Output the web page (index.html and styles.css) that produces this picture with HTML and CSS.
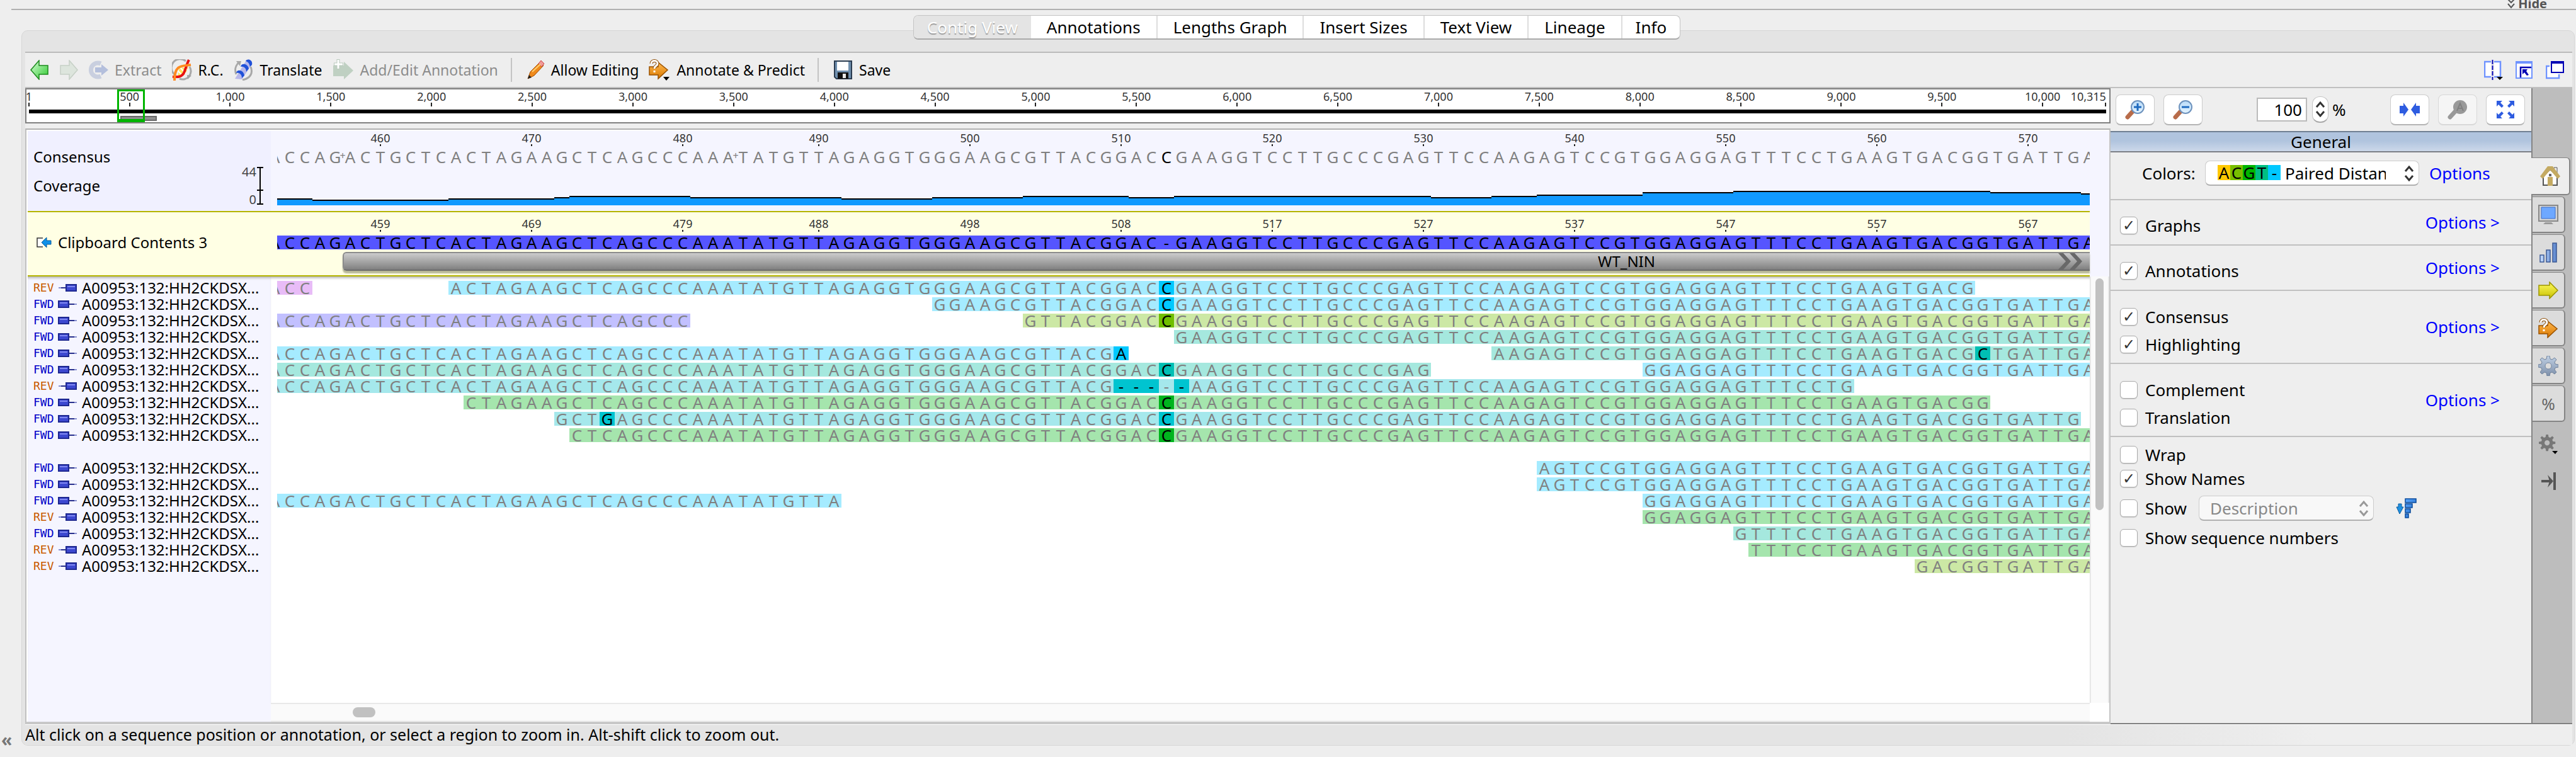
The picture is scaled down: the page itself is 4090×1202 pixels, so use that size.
FILE: index.html
```html
<!DOCTYPE html>
<html lang="en">
<head>
<meta charset="utf-8">
<title>Contig View</title>
<link rel="stylesheet" href="styles.css">
</head>
<body>
<svg class="defs" aria-hidden="true">
  <defs>
    <linearGradient id="gGreen" x1="0" y1="0" x2="1" y2="1"><stop offset="0" stop-color="#d8ffd8"/><stop offset="1" stop-color="#2fc82f"/></linearGradient>
    <linearGradient id="gOrange" x1="0" y1="0" x2="0" y2="1"><stop offset="0" stop-color="#ffb950"/><stop offset="1" stop-color="#d97800"/></linearGradient>
    <linearGradient id="gYellow" x1="0" y1="0" x2="0" y2="1"><stop offset="0" stop-color="#fffb60"/><stop offset="1" stop-color="#c8c000"/></linearGradient>
    <linearGradient id="gBlue" x1="0" y1="0" x2="1" y2="1"><stop offset="0" stop-color="#5aa8ff"/><stop offset="1" stop-color="#1a62c0"/></linearGradient>
    <linearGradient id="gBar" x1="0" y1="0" x2="1" y2="0"><stop offset="0" stop-color="#c4dcff"/><stop offset="1" stop-color="#5a84cc"/></linearGradient>
    <linearGradient id="gGear" x1="0" y1="0" x2="0" y2="1"><stop offset="0" stop-color="#c0d0e4"/><stop offset="1" stop-color="#7e90aa"/></linearGradient>
    <linearGradient id="gLens" x1="0" y1="0" x2="0" y2="1"><stop offset="0" stop-color="#b8daf8"/><stop offset="1" stop-color="#e4f4ff"/></linearGradient>
    <path id="gear" d="M14 0h4l1 5 3 1 4-3 3 3-3 4 1 3 5 1v4l-5 1-1 3 3 4-3 3-4-3-3 1-1 5h-4l-1-5-3-1-4 3-3-3 3-4-1-3-5-1v-4l5-1 1-3-3-4 3-3 4 3 3-1zM16 11a5 5 0 1 0 .1 0z" fill-rule="evenodd"/>
    <g id="predict"><path d="M1 12h14V5l15 12-15 14v-6H1z" fill="url(#gOrange)" stroke="#9a5200" stroke-width="1.5"/><path d="M4 7c0-6 10-6 10 0 0 4-5 3-5 8" fill="none" stroke="#8a4a00" stroke-width="5"/><path d="M4 7c0-6 10-6 10 0 0 4-5 3-5 8M9 18v3" fill="none" stroke="#fff" stroke-width="3"/></g>
    <g id="steps" fill="none" stroke-width="3"><path d="M2 9l6-7 6 7M2 16l6 7 6-7"/></g>
  </defs>
</svg>

<header class="top"><button class="hide" type="button"><svg width="14" height="16" viewBox="0 0 14 16"><path d="M2 1l5 5 5-5M2 8l5 6 5-6" fill="none" stroke="#555" stroke-width="2"/></svg>Hide</button></header>

<nav class="tabs">
  <button class="tab active" type="button">Contig View</button>
  <button class="tab" type="button">Annotations</button>
  <button class="tab" type="button">Lengths Graph</button>
  <button class="tab" type="button">Insert Sizes</button>
  <button class="tab" type="button">Text View</button>
  <button class="tab" type="button">Lineage</button>
  <button class="tab" type="button">Info</button>
</nav>

<main class="frame">
  <div class="toolbar">
    <button type="button" class="tool" aria-label="Back"><svg width="30" height="32" viewBox="0 0 30 32"><path d="M1 16L14 1v8h14v14H14v8z" fill="url(#gGreen)" stroke="#1c8a1c" stroke-width="1.5"/></svg></button>
    <button type="button" class="tool" aria-label="Forward" disabled><svg width="30" height="32" viewBox="0 0 30 32"><path d="M29 16L16 1v8H2v14h14v8z" fill="#dde5dd" stroke="#c6d0c6" stroke-width="1.5"/></svg></button>
    <button type="button" class="tool extract" disabled><svg width="32" height="32" viewBox="0 0 32 32"><path d="M20 6a11 11 0 1 0 0 20" fill="none" stroke="#c9cfdf" stroke-width="7"/><path d="M11 12h10V7l11 9-11 9v-5H11z" fill="#b4bfdc"/></svg>Extract</button>
    <button type="button" class="tool"><svg width="32" height="34" viewBox="0 0 32 34"><path d="M4 24A13 13 0 0 1 22 3M28 12A13 13 0 0 1 12 31" fill="none" stroke="#a8a8a8" stroke-width="3"/><path d="M24 25l7 1-6 6z" fill="#a0a0a0"/><path d="M9 27l3-13 14-1-5 11z" fill="#ffe65a"/><path d="M13 13l9 10M9 18l8 8M19 11l5 6" stroke="#fff" stroke-width="2"/><path d="M1 28h9c12-2 10-14 17-27" fill="none" stroke="#e81010" stroke-width="4"/><path d="M4 34C4 8 16 11 30 9" fill="none" stroke="#ff8a20" stroke-width="4"/></svg>R.C.</button>
    <button type="button" class="tool"><svg width="32" height="34" viewBox="0 0 32 34"><path d="M4 24C0 14 5 8 9 4M27 12c4 10 0 18-13 21" fill="none" stroke="#a8a8a8" stroke-width="3"/><path d="M4 3h8l-2 8z" fill="#a8a8a8"/><path d="M2 31L20 2l9 6-16 24z" fill="#b8b8ea"/><path d="M4 22c1-7 12-5 13 4l-4 4c0-7-5-9-9-8zM11 12c1-7 12-5 13 3l-4 5c0-6-4-9-9-8zM19 3c3-5 12-2 10 6l-3 3c-1-5-3-8-7-9z" fill="#1f50d8"/></svg>Translate</button>
    <button type="button" class="tool" disabled><svg width="34" height="34" viewBox="0 0 34 34"><path d="M1 10h17V4l15 14-15 14v-5H1z" fill="#bfd0c2"/><path d="M9 0v16M2 8h15" stroke="#b9c9bc" stroke-width="5"/><path d="M9 1v14M3 8h13" stroke="#fff" stroke-width="3"/></svg>Add/Edit Annotation</button>
    <span class="rule"></span>
    <button type="button" class="tool"><svg width="28" height="32" viewBox="0 0 28 32"><path d="M1 30l4-11L20 4l6 5L11 25z" fill="#ef8a1c" stroke="#a04a00"/><path d="M18 6l4-5 5 5-4 5z" fill="#f09a9a" stroke="#c44"/><path d="M8 19l13-12" stroke="#ffd070" stroke-width="2"/><path d="M1 30l2-6 4 4z" fill="#222"/></svg>Allow Editing</button>
    <button type="button" class="tool"><svg width="34" height="34" viewBox="0 0 34 34"><use href="#predict"/><path d="M23 28h10l-5 6z"/></svg>Annotate &amp; Predict</button>
    <span class="rule"></span>
    <button type="button" class="tool"><svg width="30" height="30" viewBox="0 0 30 30"><path d="M1 1h27v28H4l-3-3z" fill="#6f8fae" stroke="#2b3c50" stroke-width="2"/><path d="M5 2h18v14H5z" fill="#fff"/><path d="M6 19h17v10H6z" fill="#111"/><path d="M14 21h5v7h-5z" fill="#e8e8e8"/></svg>Save</button>
    <span class="grow"></span>
    <div class="window-tools">
      <button type="button" class="tool" aria-label="Split view"><svg width="30" height="32" viewBox="0 0 30 32"><path d="M11 3H1v24h10M16 3h10v24H16" fill="#fff" stroke="#6f93ff" stroke-width="2.5"/><path d="M13.500 0v32" stroke="#0000b4" stroke-width="2" stroke-dasharray="7 2"/><path d="M20 27h10l-5 5z"/></svg></button>
      <button type="button" class="tool" aria-label="Expand document"><svg width="28" height="30" viewBox="0 0 28 30"><path d="M1 2h25v26H1z" fill="#fff" stroke="#6f93ff" stroke-width="2"/><path d="M0 1h27v4H0z" fill="#6f93ff"/><path d="M8 27V11h17" fill="none" stroke="#0000b4" stroke-width="2.500"/><path d="M11 14h8l-2 3 4 6-3 1-4-5-3 3z" fill="#0000b4"/></svg></button>
      <button type="button" class="tool" aria-label="New window"><svg width="30" height="30" viewBox="0 0 30 30"><path d="M6 9H1v19h20v-6" fill="#fff" stroke="#6f93ff" stroke-width="2.500"/><path d="M9 2h19v17H9z" fill="#fff" stroke="#0000b4" stroke-width="2"/><path d="M8 1h21v4H8z" fill="#0000b4"/></svg></button>
    </div>
  </div>

  <div class="workspace">
    <section class="document">
      <div class="overview">
        <div class="scale" id="scale"></div>
        <div class="genome"></div>
        <div class="feature"></div>
        <div class="viewport"></div>
      </div>
      <div class="viewer">
        <div class="names head">
          <div class="name-consensus">Consensus</div>
          <div class="name-coverage"><span>Coverage</span>
            <span class="axis"><span class="limits"><span>44</span><span>0</span></span><svg width="11" height="60" viewBox="0 0 11 60"><path d="M0 1h10M0 37h10M0 59h10M5 1v58" stroke="#000" stroke-width="2" fill="none"/></svg></span></div>
        </div>
        <div class="track head">
          <div class="lane ticks" id="consensusTicks"></div>
          <div class="lane bases grey" id="consensus"></div>
          <div class="lane coverage" id="coverage"></div>
        </div>
        <div class="side head"></div>

        <div class="names reference"><svg width="24" height="18" viewBox="0 0 24 18"><path d="M10 2H1v14h9" fill="#fff" stroke="#333" stroke-width="1.500"/><path d="M8 9l8-8v5h7v6h-7v5z" fill="#1090e8" stroke="#0a5a9a"/></svg>Clipboard Contents 3</div>
        <div class="track reference">
          <div class="lane ticks" id="referenceTicks"></div>
          <div class="lane bases selected" id="reference"></div>
          <div class="annotation"><span>WT_NIN</span><svg width="40" height="26" viewBox="0 0 40 26"><path d="M0 0h8l12 13L8 26H0l12-13zM18 0h8l12 13-12 13h-8l12-13z" fill="#686868"/></svg></div>
        </div>
        <div class="side head"></div>

        <div class="names reads" id="names"></div>
        <div class="track reads" id="reads"></div>
        <div class="side vbar"><div class="thumb"></div></div>

        <div class="names foot"></div>
        <div class="hbar"><div class="thumb"></div></div>
        <div class="corner"></div>
      </div>
    </section>

    <section class="options">
      <div class="zoom">
        <button type="button" aria-label="Zoom in"><svg width="32" height="32" viewBox="0 0 32 32"><path d="M4 28l9-10" stroke="#b86c4a" stroke-width="7" stroke-linecap="round"/><circle cx="20" cy="12" r="10" fill="url(#gLens)" stroke="#6d92bd" stroke-width="2"/><path d="M20 6v12M14 12h12" stroke="#1e6ac0" stroke-width="3"/></svg></button>
        <button type="button" aria-label="Zoom out"><svg width="32" height="32" viewBox="0 0 32 32"><path d="M4 28l9-10" stroke="#b86c4a" stroke-width="7" stroke-linecap="round"/><circle cx="20" cy="12" r="10" fill="url(#gLens)" stroke="#6d92bd" stroke-width="2"/><path d="M14 12h12" stroke="#1e6ac0" stroke-width="3"/></svg></button>
        <label class="percent"><input type="text" value="100" aria-label="Zoom percent"><span class="stepper"><svg width="16" height="25" viewBox="0 0 16 25" stroke="#333"><use href="#steps"/></svg></span>%</label>
        <button type="button" aria-label="Zoom to selection"><svg width="32" height="24" viewBox="0 0 32 24"><path d="M0 6h6V1l8 11-8 11v-5H0zM32 6h-6V1l-8 11 8 11v-5h6z" fill="#2e5ce0"/></svg></button>
        <button type="button" aria-label="Zoom to actual size" disabled><svg width="32" height="32" viewBox="0 0 32 32"><path d="M4 28l9-10" stroke="#999" stroke-width="7" stroke-linecap="round"/><circle cx="20" cy="12" r="11" fill="#999"/><path d="M15 18l5-12 5 12M17 14h6" fill="none" stroke="#808080" stroke-width="2"/></svg></button>
        <button type="button" aria-label="Zoom to fit"><svg width="28" height="28" viewBox="0 0 28 28"><path d="M0 0h9L6 3l5 5-3 3-5-5-3 3zM28 0v9l-3-3-5 5-3-3 5-5-3-3zM0 28v-9l3 3 5-5 3 3-5 5 3 3zM28 28h-9l3-3-5-5 3-3 5 5 3-3z" fill="#2e5ce0"/></svg></button>
      </div>
      <h2>General</h2>
      <div class="group colors">
        <label for="scheme">Colors:</label>
        <span class="picker"><select id="scheme"><option>Paired Distance</option></select><span class="chips"><i>A</i><i>C</i><i>G</i><i>T</i><i>-</i></span><svg width="16" height="25" viewBox="0 0 16 25" stroke="#333"><use href="#steps"/></svg></span>
        <a href="#">Options</a>
      </div>
      <div class="group single"><label><input type="checkbox" checked>Graphs</label><a href="#">Options &gt;</a></div>
      <div class="group single"><label><input type="checkbox" checked>Annotations</label><a href="#">Options &gt;</a></div>
      <div class="group double"><div class="checks"><label><input type="checkbox" checked>Consensus</label><label><input type="checkbox" checked>Highlighting</label></div><a href="#">Options &gt;</a></div>
      <div class="group double"><div class="checks"><label><input type="checkbox">Complement</label><label><input type="checkbox">Translation</label></div><a href="#">Options &gt;</a></div>
      <div class="group last">
        <label><input type="checkbox">Wrap</label>
        <label><input type="checkbox" checked>Show Names</label>
        <div class="show"><label><input type="checkbox">Show</label>
          <span class="picker"><select disabled aria-label="Field to show"><option>Description</option></select><svg width="16" height="25" viewBox="0 0 16 25" stroke="#999"><use href="#steps"/></svg></span>
          <button type="button" class="sort" aria-label="Sort"><svg width="34" height="32" viewBox="0 0 34 32"><path d="M4 9h5v5h3L6 25 1 14h3z" fill="#1e90e0" stroke="#0a5aa0"/><path d="M15 1h17v6H15zM15 9h11v6H15zM15 17h8v6h-8zM15 25h5v6h-5z" fill="url(#gBlue)" stroke="#0a4a9a" stroke-width="1.500"/></svg></button></div>
        <label><input type="checkbox">Show sequence numbers</label>
      </div>
    </section>

    <aside class="strip">
      <button type="button" class="current" aria-label="General"><svg width="32" height="32" viewBox="0 0 32 32"><path d="M22 2h5v9h-5z" fill="#eee" stroke="#555"/><path d="M5 15v15h22V15L16 5z" fill="#fff" stroke="#555" stroke-width="2"/><path d="M12 17h8v14h-8z" fill="#c4aa62"/><path d="M12 0h8l12 16-4 4L16 6 4 20l-4-4z" fill="#c4aa62"/><path d="M14 12h4v4h-4z" fill="#666"/></svg></button>
      <button type="button" aria-label="Display"><svg width="32" height="32" viewBox="0 0 32 32"><path d="M1 1h30v25H1z" fill="#d4d4d4" stroke="#888" stroke-width="2"/><path d="M5 4h22v18H5z" fill="#6ea8ff" stroke="#3a6cc8"/><path d="M11 28h10l3 3H8z" fill="#999"/></svg></button>
      <button type="button" aria-label="Graphs"><svg width="30" height="32" viewBox="0 0 30 32"><path d="M2 20h6v11H2zM12 12h6v19h-6zM22 1h6v30h-6z" fill="url(#gBar)" stroke="#3c5a94" stroke-width="1.500"/></svg></button>
      <button type="button" aria-label="Annotations"><svg width="32" height="28" viewBox="0 0 32 28"><path d="M1 6h17V1l13 13-13 13v-5H1z" fill="url(#gYellow)" stroke="#9a9400" stroke-width="1.500"/></svg></button>
      <button type="button" aria-label="Annotate and predict"><svg width="32" height="32" viewBox="0 0 32 32"><use href="#predict"/></svg></button>
      <button type="button" aria-label="Advanced"><svg width="32" height="32" viewBox="0 0 32 32"><use href="#gear" fill="url(#gGear)" stroke="#71839c"/></svg></button>
      <button type="button" class="sign">%</button>
      <button type="button" class="bare" aria-label="Settings"><svg width="32" height="32" viewBox="0 0 32 32"><g transform="scale(.82)"><use href="#gear" fill="#777"/></g><path d="M21 26h9l-4 5z"/></svg></button>
      <button type="button" class="bare" aria-label="Collapse panel"><svg width="26" height="28" viewBox="0 0 26 28"><path d="M1 14h16M22 0v28" stroke="#555" stroke-width="4"/><path d="M11 4l9 10-9 10 3-10z" fill="#555"/></svg></button>
    </aside>
  </div>
  <footer class="status">Alt click on a sequence position or annotation, or select a region to zoom in. Alt-shift click to zoom out.</footer>
</main>
<button class="expand" type="button">«</button>
<script src="contig.js"></script>
</body>
</html>
```
FILE: styles.css
```css
* { box-sizing: border-box; }
body {
  margin: 0;
  min-height: 100vh;
  display: flex;
  flex-direction: column;
  position: relative;
  overflow-x: hidden;
  background: #eee;
  font: 26px/32px "Noto Sans", "Open Sans", sans-serif;
  color: #000;
}
button, input, select { font: inherit; color: inherit; margin: 0; padding: 0; }
button { border: 0; background: none; }
svg { display: block; flex: none; }
a { color: #00f; text-decoration: none; }
.defs { position: absolute; width: 0; height: 0; }

.top { height: 16px; margin-left: 18px; padding-right: 46px; border-bottom: 2px solid #b0b0b0; display: flex; justify-content: flex-end; align-items: flex-end; }
.hide { display: flex; align-items: center; font-size: 20px; line-height: 16px; font-weight: 700; color: #555; gap: 4px; }

.tabs { align-self: center; display: flex; margin: 8px 0 -15px 28px; height: 39px; background: #fff; border: 1px solid #c4c4c4; border-bottom: 2px solid #aaa; border-radius: 8px; overflow: hidden; position: relative; }
.tab { padding: 0 25px; border-left: 2px solid #ddd; }
.tab:first-child, .tab:last-child { padding: 0 21px; }
.tab:first-child, .tab.active + .tab { border-left: 0; }
.tab.active { background: #e4e4e4; color: #fff; text-shadow: 0 2px 1px #999; }

.frame { flex: 1; display: flex; flex-direction: column; margin: 0 2px 18px 34px; padding: 33px 3px 0 5px; border: 1px solid #d6d6d6; border-radius: 10px; background: #e4e4e4; }

.toolbar { display: flex; align-items: center; height: 58px; padding: 0 8px; background: #eee; border-top: 2px solid #bbb; border-bottom: 2px solid #c0c0c0; font-size: 23px; }
.tool { display: flex; align-items: center; gap: 10px; margin-right: 16px; white-space: nowrap; }
.tool:disabled { color: #8c8c8c; }
.rule { width: 2px; height: 38px; margin: 0 24px 0 4px; background: #c4c4c4; }
.grow { flex: 1; }
.window-tools { display: flex; gap: 4px; margin-right: -12px; }

.workspace { flex: 1; display: grid; grid-template-columns: minmax(0, 1fr) 668px 65px; background: #eee; }
.document { display: flex; flex-direction: column; gap: 8px; }

.overview { position: relative; height: 56px; border: 2px solid #808080; background: #fff; padding: 2px 5px 0 4px; }
.scale { display: flex; height: 25px; }
.mark { width: 0; display: flex; flex-direction: column; align-items: center; font-size: 18px; line-height: 19px; color: #333; white-space: nowrap; }
.mark::after { content: ""; width: 2px; height: 6px; background: #222; }
.scale .mark { min-width: 0; flex: none; }
.scale .space { flex: 1 1 0; }
.scale .mark:last-child { align-items: flex-end; }
.genome { height: 6px; margin-top: 5px; background: #000; }
.feature { position: absolute; left: 149px; top: 42px; width: 58px; height: 8px; background: #909090; border: 2px solid #686868; }
.viewport { position: absolute; left: 144px; top: 0; width: 44px; height: 52px; border: 3px solid #00b400; border-bottom-width: 5px; }

.viewer { flex: 1; display: grid; grid-template-columns: 386px minmax(0, 1fr) 31px; grid-template-rows: 127px 104px 1fr 30px; border: 2px solid #b4b4b4; border-width: 2px 2px 4px; padding: 2px 0 0 2px; background: #fff; border-color: #b0b0b0 #c4c4c4 #c8c8c8 #c0c0c0; overflow: hidden; }
.names { background: #f5f5ff; font-size: 24px; padding-left: 9px; }
.names.head { background: #f0f0ff; }
.track { min-width: 0; padding-left: 10px; position: relative; }
.head { background: #f5f5ff; }
.name-consensus { padding-top: 25px; }
.name-coverage { display: flex; align-items: flex-start; justify-content: space-between; padding-right: 11px; }
.name-coverage > span:first-child { padding-top: 14px; }
.axis { display: flex; gap: 1px; }
.limits { display: flex; flex-direction: column; justify-content: space-between; align-items: flex-end; font-size: 20px; line-height: 16px; color: #444; }

.lane { overflow-x: clip; display: flex; }
.ticks { height: 28px; padding-top: 2px; }
.ticks .col { display: flex; justify-content: center; }
.col { flex: none; width: 24px; height: 22px; text-align: center; position: relative; }
.col:first-child { margin-left: -16px; }
.bases { line-height: 22px; margin-top: 2px; }
.grey { color: #808080; }
.gap-mark { position: absolute; right: -5px; top: 0; width: 10px; font-size: 16px; line-height: 18px; }
.coverage { align-items: flex-end; height: 66px; }
.bar { background: #19f; border-top: 2px solid #000; }

.reference { background: #ffffe4; border: 0 solid #b4b400; border-width: 2px 0; }
.names.reference { display: flex; align-items: center; gap: 10px; padding: 0 0 4px 14px; }
.reference .bases { background: #55f; color: #000; margin-top: 0; }
.reference .ticks { height: 37px; padding-top: 9px; }
.annotation { display: flex; align-items: center; justify-content: flex-end; height: 30px; margin: 4px 0 0 104px; padding: 0 10px; border: 2px solid #888; border-color: #8c8c8c #8c8c8c #6c6c6c; border-right: 0; border-radius: 6px 0 0 6px; background: linear-gradient(#ccc, #808080); box-shadow: 0 4px 2px #b8b898; font-size: 24px; }
.annotation span { margin-right: 640px; }

.names.reads, .track.reads { padding-top: 7px; box-shadow: inset 0 5px 4px -3px #aaa; }
.read-name { display: flex; align-items: center; height: 26px; line-height: 26px; padding-bottom: 4px; white-space: nowrap; }
.read-name .dir { width: 39px; font: 18px/22px "DejaVu Sans Mono", monospace; color: #0000c8; }
.read-name.rev .dir { color: #c85a00; }
.read-name svg { margin-right: 7px; }
.read { display: flex; height: 22px; margin-bottom: 4px; line-height: 22px; color: #808080; overflow-x: clip; }
.hit { color: #000; }
.cyan { background: #a5ebff; } .cyan.hit { background: #00c8ff; }
.teal { background: #a5e8de; } .teal.hit { background: #00bfb4; }
.aqua { background: #a5e8ec; } .aqua.hit { background: #00c4d0; }
.green { background: #a5e5ad; } .green.hit { background: #00b41e; }
.lime { background: #cce8a5; } .lime.hit { background: #70be00; }
.pink { background: #e8bcf7; }
.violet { background: #c2c0ff; }

.vbar { background: #fafafa; border: solid #e8e8e8; border-width: 0 2px; padding: 3px 7px 0; }
.vbar .thumb { height: 368px; border-radius: 8px; background: #c1c1c1; }
.hbar { background: #fafafa; border-top: 2px solid #e8e8e8; border-bottom: 2px solid #f0f0f0; padding: 5px 130px 0; }
.hbar .thumb { width: 36px; height: 16px; border-radius: 8px; background: #c1c1c1; }
.corner { background: #fff; }

.options { border-bottom: 2px solid #808080; }
.zoom { display: flex; align-items: center; height: 68px; padding: 0 10px 0 8px; gap: 14px; }
.zoom button { display: flex; align-items: center; justify-content: center; width: 62px; height: 49px; background: #fff; border: 1px solid #ccc; border-bottom: 2px solid #b4b4b4; border-radius: 8px; }
.zoom button:disabled { background: #f5f5f5; border-color: #d8d8d8; }
.percent { display: flex; align-items: center; flex: 1; padding-left: 72px; gap: 6px; }
.percent input { width: 80px; height: 38px; padding-right: 6px; text-align: right; background: #fff; border: 2px solid #bbb; border-radius: 0; }
.stepper { display: flex; align-items: center; justify-content: center; width: 26px; height: 42px; margin-left: 2px; background: #fff; border: 1px solid #c4c4c4; border-bottom: 2px solid #aaa; border-radius: 12px; }
.options h2 { margin: 0; height: 34px; font: inherit; text-align: center; line-height: 30px; background: linear-gradient(#b0c4de 45%, #ccd8ea); border-top: 2px solid #6f7f92; border-bottom: 2px solid #7c7f86; }
.group { display: flex; justify-content: space-between; padding: 0 50px 0 15px; border-bottom: 2px solid #c0c0c0; }
.group label { display: flex; align-items: center; gap: 12px; }
.group.single { height: 72px; padding-top: 24px; }
.group.single a { margin-top: -5px; }
.group.single label { height: 32px; }
.group.double { height: 116px; align-items: center; padding-top: 4px; }
.group.double a { margin-top: -4px; }
.checks { display: flex; flex-direction: column; gap: 12px; padding-top: 8px; }
.group.colors { height: 76px; justify-content: flex-start; align-items: flex-start; padding: 13px 50px 0; gap: 16px; }
.colors label { height: 40px; width: 84px; white-space: nowrap; }
.colors a { line-height: 40px; }
.group.last { flex-direction: column; justify-content: flex-start; gap: 6px; padding: 12px 50px 0 15px; border: 0; }
.show { display: flex; align-items: center; height: 50px; }
.show .picker { margin-left: 19px; width: 278px; }
.sort { margin-left: 35px; }
input[type="checkbox"] { appearance: none; width: 28px; height: 28px; background: #fff; border: 1px solid #aaa; border-radius: 6px; box-shadow: 0 1px 1px #ccc; display: grid; place-items: center; }
input[type="checkbox"]:checked::before { content: "✓"; font: 700 24px/24px "DejaVu Sans", sans-serif; color: #333; }
.picker { position: relative; width: 340px; }
.picker select { appearance: none; display: block; width: 100%; height: 40px; padding: 0 44px 0 17px; background: #fff; border: 1px solid #ccc; border-bottom: 2px solid #b0b0b0; border-radius: 8px; overflow: hidden; }
.picker select:disabled { background: #f8f8f8; color: #888; opacity: 1; }
.colors .picker select { padding: 0 52px 0 126px; }
.picker svg { position: absolute; right: 8px; top: 8px; }
.chips { position: absolute; left: 20px; top: 7px; display: flex; line-height: 24px; pointer-events: none; }
.chips i { width: 20px; text-align: center; font-style: normal; background: #ffc800; }
.chips i:nth-child(2) { background: #78be00; }
.chips i:nth-child(3) { background: #00b400; }
.chips i:nth-child(4) { background: #00be82; }
.chips i:nth-child(5) { background: #00c8ff; }

.strip { display: flex; flex-direction: column; align-items: flex-start; gap: 2px; padding-top: 110px; background: #bdbdbd; border-left: 2px solid #858585; border-bottom: 2px solid #808080; }
.strip button { display: flex; align-items: center; justify-content: center; width: 52px; height: 58px; background: #dcdcdc; border: 2px solid #858585; border-left: 0; border-top-width: 1px; border-radius: 0 6px 6px 0; }
.strip button.current { width: 62px; height: 60px; margin-left: -2px; background: #eee; }
.strip .sign { color: #666; }
.strip button.bare { background: none; border: 0; height: 56px; margin-top: 6px; margin-bottom: -6px; }

.status { height: 33px; line-height: 30px; font-size: 25px; background: linear-gradient(to right, #e4e4e4 80%, #eee 90%); border-top: 1px solid #fff; }
.expand { position: absolute; left: 2px; bottom: 14px; font-size: 28px; line-height: 28px; font-weight: 700; color: #777; }
```
FILE: contig.js
```javascript
// Bases visible in the window; column 0 is partly scrolled off to the left.
const CONSENSUS =
  'ACCAGACTGCTCACTAGAAGCTCAGCCCAAATATGTTAGAGGTGGGAAGCGTTACGGACC' +
  'GAAGGTCCTTGCCCGAGTTCCAAGAGTCCGTGGAGGAGTTTCCTGAAGTGACGGTGATTGA';
const END = CONSENSUS.length;

// Each run: first column, end column, colour, highlighted bases {column: base}.
const INSERT = { 59: 'C' };
const READS = [
  ['REV', [0, 3, 'pink'], [12, 113, 'cyan', INSERT]],
  ['FWD', [44, END, 'cyan', INSERT]],
  ['FWD', [0, 28, 'violet'], [50, END, 'lime', INSERT]],
  ['FWD', [60, END, 'teal']],
  ['FWD', [0, 57, 'cyan', { 56: 'A' }], [81, END, 'teal', { 113: 'C' }]],
  ['FWD', [0, 77, 'teal', INSERT], [91, END, 'cyan']],
  ['REV', [0, 105, 'aqua', { 56: '-', 57: '-', 58: '-', 60: '-' }, { 59: '-' }]],
  ['FWD', [13, 114, 'green', INSERT]],
  ['FWD', [19, 120, 'aqua', { 22: 'G', 59: 'C' }]],
  ['FWD', [20, END, 'green', INSERT]],
  null,
  ['FWD', [84, END, 'cyan']],
  ['FWD', [84, END, 'cyan']],
  ['FWD', [0, 38, 'cyan'], [91, END, 'cyan']],
  ['REV', [91, END, 'green']],
  ['FWD', [97, END, 'teal']],
  ['REV', [98, END, 'green']],
  ['REV', [109, END, 'lime']],
];

const byId = (id) => document.getElementById(id);
const add = (parent, tag, className, text = '') => {
  const node = document.createElement(tag);
  node.className = className;
  node.textContent = text;
  parent.appendChild(node);
  return node;
};

// Overview scale
const scale = byId('scale');
const stops = [1];
for (let n = 500; n <= 10000; n += 500) stops.push(n);
stops.push(10315);
stops.forEach((n, i) => {
  if (i) add(scale, 'span', 'space').style.flexGrow = n - stops[i - 1];
  add(scale, 'span', 'mark', n.toLocaleString('en-US'));
});

// Position rulers
function ticks(id, labels) {
  const columns = [7, 17, 27, 36, 46, 56, 66, 76, 86, 96, 106, 116];
  for (let c = 0; c < END; c++) {
    const cell = add(byId(id), 'span', 'col');
    const i = columns.indexOf(c);
    if (i >= 0) add(cell, 'span', 'mark', labels[i]);
  }
}
ticks('consensusTicks', [460, 470, 480, 490, 500, 510, 520, 530, 540, 550, 560, 570]);
ticks('referenceTicks', [459, 469, 479, 488, 498, 508, 517, 527, 537, 547, 557, 567]);

[...CONSENSUS].forEach((base, c) => {
  const cell = add(byId('consensus'), 'span', c === 59 ? 'col hit' : 'col', base);
  if (c === 4 || c === 30) add(cell, 'span', 'gap-mark', '+');
  add(byId('reference'), 'span', 'col', c === 59 ? '-' : base);
});

// Coverage: [first column, height]
const STEPS = [[0, 11], [3, 9], [12, 11], [19, 13], [20, 15], [28, 13], [38, 11], [44, 13],
  [50, 15], [57, 13], [60, 15], [77, 13], [81, 15], [84, 17], [91, 21], [97, 23], [114, 21], [120, 19]];
let level = 0;
for (let c = 0; c < END; c++) {
  const step = STEPS.find(([start]) => start === c);
  if (step) level = step[1];
  add(byId('coverage'), 'span', 'col bar').style.height = level + 'px';
}

// Reads
const ARROW = '<svg width="31" height="12" viewBox="0 0 31 12"><path d="M18 6h12" stroke="#8890d0" stroke-width="2"/>' +
  '<path d="M18 6h8" stroke="#28308c" stroke-width="2"/><path d="M1 1h16v10H1z" fill="#3c48d0" stroke="#1e2890" stroke-width="2"/><path d="M3 4h12" stroke="#8088f0" stroke-width="2"/></svg>';
const ARROW_BACK = '<svg width="31" height="12" viewBox="0 0 31 12"><path d="M1 6h12" stroke="#8890d0" stroke-width="2"/>' +
  '<path d="M5 6h8" stroke="#28308c" stroke-width="2"/><path d="M13 1h16v10H13z" fill="#3c48d0" stroke="#1e2890" stroke-width="2"/><path d="M15 4h12" stroke="#8088f0" stroke-width="2"/></svg>';

for (const read of READS) {
  const label = add(byId('names'), 'div', 'read-name');
  const row = add(byId('reads'), 'div', 'read');
  if (!read) continue;
  const [dir, ...runs] = read;
  if (dir === 'REV') label.classList.add('rev');
  add(label, 'span', 'dir', dir);
  label.insertAdjacentHTML('beforeend', dir === 'REV' ? ARROW_BACK : ARROW);
  add(label, 'span', 'id', 'A00953:132:HH2CKDSX...');
  for (let c = 0; c < END; c++) {
    const run = runs.find(([start, end]) => c >= start && c < end);
    if (!run) { add(row, 'span', 'col'); continue; }
    const [, , color, hits = {}, plain = {}] = run;
    add(row, 'span', `col ${color}${hits[c] ? ' hit' : ''}`, hits[c] || plain[c] || CONSENSUS[c]);
  }
}
```
